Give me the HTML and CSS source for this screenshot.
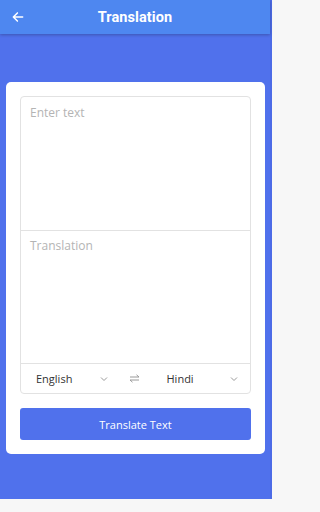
FILE: index.html
```html
<!DOCTYPE html>
<html>
<head>
<meta charset="utf-8">
<link rel="stylesheet" href="styles.css">
</head>
<body>
<div class="app">
  <header class="topbar">
    <svg class="back" width="14" height="14" viewBox="0 0 24 24"><path d="M20 12H5M11 5l-7 7 7 7" fill="none" stroke="#fff" stroke-width="2.6" stroke-linecap="round" stroke-linejoin="round"/></svg>
    <h1 class="title">Translation</h1>
  </header>
  <main class="content">
    <section class="card">
      <div class="box">
        <div class="field">Enter text</div>
        <div class="field field-second">Translation</div>
        <div class="langs">
          <div class="lang">
            <span>English</span>
            <svg class="chev" width="8" height="6" viewBox="0 0 8 6"><path d="M1 1.5l3 3 3-3" fill="none" stroke="#9a9a9a" stroke-width="1"/></svg>
          </div>
          <svg class="swap" width="11" height="9" viewBox="0 0 11 9"><path d="M1 3h9M7.5 0.8L10 3M10 6H1M3.5 8.2L1 6" fill="none" stroke="#9a9a9a" stroke-width="1"/></svg>
          <div class="lang">
            <span>Hindi</span>
            <svg class="chev" width="8" height="6" viewBox="0 0 8 6"><path d="M1 1.5l3 3 3-3" fill="none" stroke="#9a9a9a" stroke-width="1"/></svg>
          </div>
        </div>
      </div>
      <button class="btn">Translate Text</button>
    </section>
  </main>
</div>
</body>
</html>
```
FILE: styles.css
```css
* { box-sizing: border-box; }
html, body { margin: 0; padding: 0; }
body {
  background: #f7f7f7;
  font-family: "Open Sans", "Noto Sans", sans-serif;
  height: 512px;
  overflow: hidden;
}
.app {
  width: 272px;
  height: 499px;
  background: #5071ec;
  border-right: 2px solid #4c6be6;
}
.topbar {
  height: 34px;
  background: #4e87f0;
  box-shadow: 0 1px 3px rgba(0,0,0,0.25);
  display: flex;
  align-items: center;
  justify-content: center;
  position: relative;
}
.back {
  position: absolute;
  left: 11px;
  top: 10px;
}
.title {
  margin: 0;
  color: #fff;
  font-family: Roboto, "Noto Sans", sans-serif;
  font-weight: 700;
  font-size: 14.5px;
  letter-spacing: 0.1px;
}
.content {
  padding: 48px 5px 0 6px;
}
.card {
  background: #fff;
  border-radius: 5px;
  padding: 14px;
}
.box {
  border: 1px solid #e2e2e2;
  border-radius: 4px;
  height: 298px;
  display: flex;
  flex-direction: column;
}
.field {
  height: 133px;
  padding: 8px 9px;
  color: #b4b4b4;
  font-size: 12px;
  line-height: 16px;
}
.field-second {
  border-top: 1px solid #e2e2e2;
  padding-top: 7px;
}
.langs {
  flex: 1;
  border-top: 1px solid #e2e2e2;
  display: flex;
  align-items: center;
  padding: 0 12px 0 15px;
  color: #333;
  font-size: 11px;
}
.lang {
  flex: 1;
  display: flex;
  align-items: center;
  justify-content: space-between;
}
.lang:first-child { padding-right: 21px; }
.swap { margin: 0 27px 0 0; }
.btn {
  display: block;
  width: 100%;
  margin-top: 14px;
  height: 32px;
  border: none;
  border-radius: 3px;
  background: #5071ec;
  color: #fff;
  font-family: "Open Sans", "Noto Sans", sans-serif;
  font-size: 11px;
}
```
